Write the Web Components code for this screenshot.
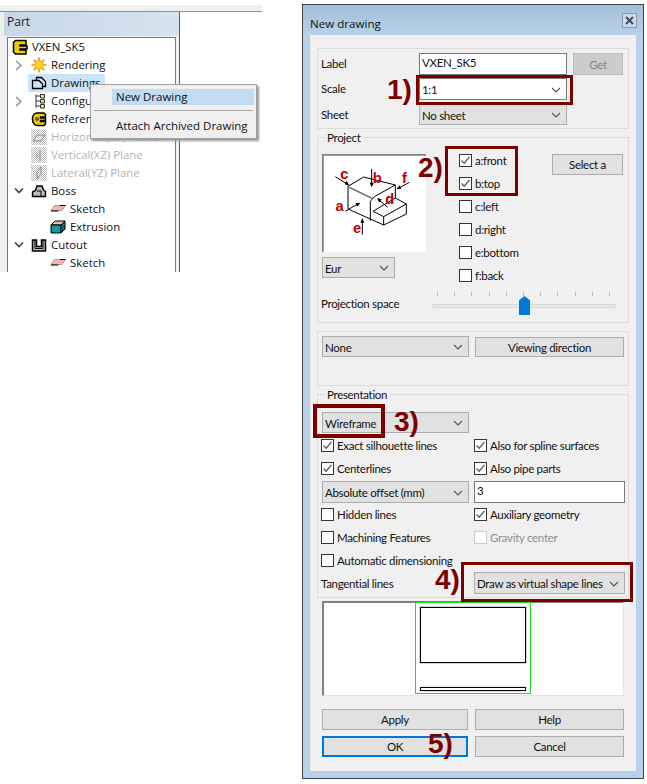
<!DOCTYPE html>
<html>
<head>
<meta charset="utf-8">
<title>New drawing</title>
<style>
html, body { margin: 0; background: #fff; }
body { font: 11.5px Lato, "Noto Sans", sans-serif; color: #111; }
.page { position: relative; width: 647px; height: 784px; display: flex; align-items: flex-start; gap: 40px; overflow: hidden; }

/* dialog content */
.g-top { height: 81px; padding: 4px 0 0 3px; display: grid; grid-template-columns: 98px 148px 6px 50px; grid-template-rows: 25px 26px 21px; }
.g-top span { line-height: 22px; }
.g-top .sheet-lab { line-height: 21px; }
.g-top .h22 { height: 22px; }
.g-project { height: 186px; padding: 11px 0 0 4px; }
.proj-grid { display: grid; grid-template-columns: 104px 33px 93px 71px; height: 142px; }
.proj-left { padding-top: 5px; display: flex; flex-direction: column; gap: 5px; }
.proj-left win-select { width: 73px; height: 21px; }
.proj-right { padding-top: 5px; }
.proj-right win-button { height: 21px; }
.slider-row { display: grid; grid-template-columns: 110px 184px; height: 26px; align-items: center; }
.slider-row span { margin-left: -1px; line-height: 24px; }
.g-view { height: 55px; padding: 4px 0 0 4px; display: grid; grid-template-columns: 147px 149px; column-gap: 6px; align-items: start; }
.g-view win-select { height: 21px; }
.g-view win-button { height: 20px; margin-top: 1px; }
.g-pres { height: 204px; padding: 17px 0 0 3px; display: grid; grid-template-columns: 153px 151px; grid-template-rows: 22px repeat(7, 23px); align-items: center; }
.g-pres .wire { width: 147px; height: 21px; margin-left: 1px; align-self: start; grid-column: 1 / 3; }
.g-pres .abs { width: 147px; height: 22px; margin: 1px 0 0 1px; align-self: start; }
.g-pres .val { height: 22px; margin-top: 1px; align-self: start; }
.g-pres .draw { height: 22px; align-self: start; }
.btn-grid { margin: 13px 0 0 5px; display: grid; grid-template-columns: 146px 149px; grid-template-rows: 21px 21px; gap: 6px 7px; }
</style>
</head>
<body>
<template id="tree-panel-t">
  <style>
    :host { display: block; width: 262px; height: 272px; padding-top: 5px; box-sizing: border-box; font: 11.4px "Open Sans", "Noto Sans", sans-serif; color: #111; }
    .band { height: 6px; background: #f0f0f0; border-bottom: 1px solid #8c8c8c; }
    .body { display: flex; height: 260px; }
    .side { width: 180px; box-sizing: border-box; background: #f0f0f0; padding-left: 4px; border-right: 1px solid #5f5f5f; display: flex; flex-direction: column; }
    .head { height: 24px; line-height: 20px; padding-left: 3px; background: linear-gradient(90deg, #c6d8e9, #d6e3ef); font-size: 12px; color: #222; }
    .tree { flex: 1; margin: 1px 3px 0 3px; background: #fff; border: 1px solid #7a7a7a; border-bottom: 0; overflow: hidden; }
  </style>
  <div class="band"></div>
  <div class="body">
    <div class="side">
      <div class="head"><slot name="title"></slot></div>
      <div class="tree"><slot></slot></div>
    </div>
  </div>
</template>

<template id="tree-item-t">
  <style>
    :host { display: flex; align-items: center; height: 18px; padding-left: 4px; white-space: nowrap; }
    :host([disabled]) { color: #b4b4b4; }
    .indent { flex: none; display: flex; align-items: center; }
    .indent svg { margin-left: 2px; }
    .sel { display: flex; align-items: center; height: 18px; gap: 4px; padding: 0 4px 0 3px; margin-left: -3px; }
    :host([selected]) .sel { background: #cce4f7; }
    .ico { width: 16px; height: 16px; flex: none; display: flex; }
    .txt { margin-top: -2px; }
  </style>
  <div class="indent"></div>
  <div class="sel"><span class="ico"><slot name="icon"></slot></span><span class="txt"><slot></slot></span></div>
</template>

<template id="menu-t">
  <style>
    :host { display: block; position: absolute; left: 90px; top: 84px; width: 167px; height: 55px; box-sizing: border-box; background: #f0f0f0; border: 1px solid #a0a0a0; box-shadow: 2px 2px 2px #9a9a9a; font: 11.5px "Open Sans", "Noto Sans", sans-serif; padding: 4px 2px 0 2px; z-index: 3; }
    .hi { height: 16px; line-height: 15px; margin-left: 19px; padding-left: 4px; background: #c3dcf3; }
    hr { height: 1px; margin: 5px 1px 5px 1px; border: 0; background: #a6a6a6; }
    .it { height: 22px; line-height: 20px; margin-left: 23px; }
  </style>
  <div class="hi">New Drawing</div>
  <hr>
  <div class="it">Attach Archived Drawing</div>
</template>

<template id="dialog-t">
  <style>
    :host { display: block; width: 342px; height: 775px; margin-top: 4px; box-sizing: border-box; border: 1px solid #38444d; background: #b9d1ea; font: 11.5px Lato, "Noto Sans", sans-serif; letter-spacing: -0.3px; color: #111; }
    .title { height: 30px; display: flex; align-items: center; justify-content: space-between; padding: 0 6px 0 7px; background: linear-gradient(#a4bed9, #b9d1ea); font: 11.6px "Open Sans", sans-serif; letter-spacing: 0; }
    .cap { margin-top: 7px; }
    .x { width: 13px; height: 13px; border: 1px solid #8a9aaa; background: #c8dbef; display: flex; align-items: center; justify-content: center; }
    .client { margin: 0 7px; height: 736px; background: #f0f0f0; padding: 13px 7px 0; box-sizing: border-box; }
    .client ::slotted(group-box) { margin-bottom: 8px; }
  </style>
  <div class="title"><span class="cap"><slot name="title"></slot></span>
    <span class="x"><svg width="9" height="9" viewBox="0 0 9 9"><path d="M1 1L8 8M8 1L1 8" stroke="#4a4a4a" stroke-width="2"/></svg></span></div>
  <div class="client"><slot></slot></div>
</template>

<template id="group-t">
  <style>
    :host { display: block; position: relative; box-sizing: border-box; border: 1px solid #dcdcdc; }
    .legend { position: absolute; left: 7px; top: -8px; padding: 0 2px; background: #f0f0f0; line-height: 15px; }
  </style>
  <div class="legend"></div>
  <slot></slot>
</template>

<template id="select-t">
  <style>
    :host { display: flex; align-items: center; box-sizing: border-box; border: 1px solid #adadad; background: #e1e1e1; padding: 1px 5px 0 2px; justify-content: space-between; height: 22px; white-space: nowrap; }
    :host([white]) { background: #fff; border-color: #7a7a7a; }
  </style>
  <span><slot></slot></span>
  <svg width="10" height="6" viewBox="0 0 10 6"><path d="M1 1L5 5L9 1" fill="none" stroke="#555" stroke-width="1.1"/></svg>
</template>

<template id="input-t">
  <style>
    :host { display: block; box-sizing: border-box; border: 1px solid #7a7a7a; background: #fff; padding-left: 2px; line-height: 18px; }
  </style>
  <slot></slot>
</template>

<template id="button-t">
  <style>
    :host { display: flex; align-items: center; justify-content: center; box-sizing: border-box; border: 1px solid #adadad; background: #e1e1e1; white-space: nowrap; }
    :host([disabled]) { background: #ccc; color: #858585; border-color: #bfbfbf; }
    :host([primary]) { border: 2px solid #0078d7; }
  </style>
  <slot></slot>
</template>

<template id="check-t">
  <style>
    :host { display: flex; align-items: center; height: 23px; gap: 3px; white-space: nowrap; }
    :host([disabled]) { color: #8f8f8f; }
    .box { width: 13px; height: 13px; box-sizing: border-box; border: 1px solid #333; background: #fff; display: flex; flex: none; }
    :host([disabled]) .box { border-color: #ccc; }
    svg { display: none; }
    :host([checked]) svg { display: block; }
  </style>
  <span class="box"><svg width="11" height="11" viewBox="0 0 11 11"><path d="M1.5 5.5L4.2 8.2L9.5 1.8" fill="none" stroke="#555" stroke-width="1.3"/></svg></span>
  <span><slot></slot></span>
</template>

<template id="slider-t">
  <style>
    :host { display: block; position: relative; height: 26px; }
    .ticks { display: flex; justify-content: space-between; margin: 0 6px 0 5px; padding-top: 1px; height: 4px; }
    .ticks i { width: 1px; height: 4px; background: #bdbdbd; }
    .track { margin-top: 8px; height: 4px; box-sizing: border-box; background: #e7eaea; border: 1px solid #d6d6d6; }
    .thumb { position: absolute; left: 87px; top: 5px; width: 11px; height: 19px; background: #0078d7; clip-path: polygon(50% 0, 100% 22%, 100% 100%, 0 100%, 0 22%); }
  </style>
  <div class="ticks"><i></i><i></i><i></i><i></i><i></i><i></i><i></i><i></i><i></i><i></i><i></i></div>
  <div class="track"></div>
  <div class="thumb"></div>
</template>

<template id="figure-t">
  <style>
    :host { display: block; width: 104px; height: 98px; box-sizing: border-box; background: #fff; border-left: 1px solid #808080; border-top: 1px solid #808080; box-shadow: inset 1px 1px 0 #a0a0a0; }
    svg { display: block; margin: -1px 0 0 -1px; }
    path { fill: none; stroke: #000; stroke-width: 3; }
    .thick { stroke: #777; stroke-width: 5; }
    .head { fill: #000; stroke: none; }
    text { font: bold 44px "Liberation Sans", sans-serif; letter-spacing: 0; fill: #c00000; text-anchor: middle; }
  </style>
  <svg width="104" height="98" viewBox="65 90 312 294">
    <path d="M143 187L190 159M190 159L285 183M143 187V255L250 303L318 270V240L285 222V183L222 218L210 232V290"/>
    <path class="thick" d="M146 190L218 224"/>
    <path d="M218 262L250 278L318 240M218 262L285 222M250 278V303"/>
    <path d="M105 158L140 180M214 135V182M327 175L296 192M135 262L172 240M262 250L236 228M186 332V290"/>
    <path class="head" d="M148 185L133 181L139 171ZM214 190L208 176H220ZM288 196L298 184L303 194ZM180 236L171 248L165 238ZM230 222L244 226L237 236ZM186 282L192 296H180Z"/>
    <text x="132" y="166">c</text>
    <text x="231" y="178">b</text>
    <text x="312" y="176">f</text>
    <text x="118" y="260">a</text>
    <text x="268" y="241">d</text>
    <text x="170" y="328">e</text>
  </svg>
</template>

<template id="preview-t">
  <style>
    :host { display: block; width: 302px; height: 95px; margin-left: 5px; box-sizing: border-box; background: #fff; border: 1px solid #e4e4e4; border-left: 2px solid #808080; border-top: 2px solid #808080; }
    .sheet { width: 116px; height: 92px; box-sizing: border-box; margin: -1px 0 0 91px; border: 1px solid #1ee01e; padding: 4px 4px 0; }
    .a { height: 56px; box-sizing: border-box; border: 1px solid #000; box-shadow: 0 0 1px #000; }
    .b { height: 4px; box-sizing: border-box; border: 1px solid #000; margin-top: 24px; box-shadow: 0 0 1px #000; }
  </style>
  <div class="sheet"><div class="a"></div><div class="b"></div></div>
</template>

<template id="callout-t">
  <style>
    :host { display: block; position: absolute; box-sizing: border-box; border: 3px solid #7b0000; z-index: 2; }
  </style>
</template>

<template id="step-t">
  <style>
    :host { display: block; position: absolute; font: bold 28px/30px "Liberation Sans", sans-serif; color: #7b0000; z-index: 2; white-space: nowrap; }
  </style>
  <slot></slot>
</template>

<div class="page">
  <tree-panel>
    <span slot="title">Part</span>
    <tree-item level="0"><svg slot="icon" width="16" height="16" viewBox="0 0 16 16"><path d="M3.5 1.5H14V6H8V7H15V10H8V11H14V15H3.5L1.5 13V3.5Z" fill="#f3cb00" stroke="#000" stroke-width="1.5"/></svg>VXEN_SK5</tree-item>
    <tree-item level="1" exp="right"><svg slot="icon" width="16" height="16" viewBox="0 0 16 16"><path d="M8 0.5V15.5M0.5 8H15.5M2.7 2.7L13.3 13.3M13.3 2.7L2.7 13.3" stroke="#f28c1a" stroke-width="1.6"/><circle cx="8" cy="8" r="4.4" fill="#ffd91a" stroke="#f6a11a"/></svg>Rendering</tree-item>
    <tree-item level="1" selected><svg slot="icon" width="16" height="16" viewBox="0 0 16 16"><path d="M5.5 5V2.5H10.5L14.5 6.5V11.5H11.5" fill="none" stroke="#000" stroke-width="1.3"/><path d="M1.5 5.5H8L11.5 9V13.5H1.5Z" fill="none" stroke="#000" stroke-width="1.3"/></svg>Drawings</tree-item>
    <tree-item level="1" exp="right"><svg slot="icon" width="16" height="16" viewBox="0 0 16 16"><path d="M5 1.5V14.5M5 3H9M5 8H9M5 13H9" stroke="#333" fill="none"/><path d="M9.5 1.5H13.5V5H9.5ZM9.5 6.5H13.5V10H9.5ZM9.5 11.5H13.5V15H9.5Z" fill="#f7e27a" stroke="#333"/></svg>Configurations</tree-item>
    <tree-item level="1"><svg slot="icon" width="16" height="16" viewBox="0 0 16 16"><path d="M6 2H13L14.5 3.5V6H9.5V7H14.5V9.5H9.5V10.5H14.5V13L13 14.5H6C3 14.5 1.5 11 1.5 8C1.5 5 3 2 6 2Z" fill="#f3cb00" stroke="#000" stroke-width="1.5"/><circle cx="6" cy="8" r="2" fill="#555"/></svg>Reference</tree-item>
    <tree-item level="1" disabled><svg slot="icon" width="16" height="16" viewBox="0 0 16 16"><defs><pattern id="d1" width="2" height="2" patternUnits="userSpaceOnUse"><rect width="1" height="1" fill="#bbb"/><rect x="1" y="1" width="1" height="1" fill="#bbb"/></pattern></defs><rect width="16" height="16" fill="url(#d1)"/><path d="M2 12L6 6H14L10 12Z" fill="none" stroke="#888"/></svg>Horizontal(XY) Plane</tree-item>
    <tree-item level="1" disabled><svg slot="icon" width="16" height="16" viewBox="0 0 16 16"><defs><pattern id="d2" width="2" height="2" patternUnits="userSpaceOnUse"><rect width="1" height="1" fill="#bbb"/><rect x="1" y="1" width="1" height="1" fill="#bbb"/></pattern></defs><rect width="16" height="16" fill="url(#d2)"/><path d="M9 3V14M6 6V11" fill="none" stroke="#888"/></svg>Vertical(XZ) Plane</tree-item>
    <tree-item level="1" disabled><svg slot="icon" width="16" height="16" viewBox="0 0 16 16"><defs><pattern id="d3" width="2" height="2" patternUnits="userSpaceOnUse"><rect width="1" height="1" fill="#bbb"/><rect x="1" y="1" width="1" height="1" fill="#bbb"/></pattern></defs><rect width="16" height="16" fill="url(#d3)"/><path d="M6 14L10 9V2L6 7Z" fill="none" stroke="#888"/></svg>Lateral(YZ) Plane</tree-item>
    <tree-item level="1" exp="down"><svg slot="icon" width="16" height="16" viewBox="0 0 16 16"><path d="M1.5 13.5V9L4.5 7.5L6 3H11L12.5 7L14.5 8.5V13.5Z" fill="#bbb" stroke="#000" stroke-width="1.4"/><path d="M6 8H10V13" fill="none" stroke="#000"/></svg>Boss</tree-item>
    <tree-item level="2"><svg slot="icon" width="16" height="16" viewBox="0 0 16 16"><path d="M4.5 4.5H15.5L12 9.5H1Z" fill="#f6b4b4" stroke="#8a6a6a" stroke-width="0.6"/><path d="M1 10H8.5M10 4.5H15.5" stroke="#000" fill="none"/></svg>Sketch</tree-item>
    <tree-item level="2"><svg slot="icon" width="16" height="16" viewBox="0 0 16 16"><path d="M1 6L5 2H15L11 6Z" fill="#f6b4b4" stroke="#000"/><path d="M1 6H11V14H1Z" fill="#109a9a" stroke="#000"/><path d="M11 6L15 2V10L11 14Z" fill="#0c6a78" stroke="#000"/></svg>Extrusion</tree-item>
    <tree-item level="1" exp="down"><svg slot="icon" width="16" height="16" viewBox="0 0 16 16"><path d="M1.5 3H5.5V9.5H10.5V3H14.5V14H1.5Z" fill="#bbb" stroke="#000" stroke-width="1.5"/><path d="M4 3V11.5H12V3" fill="none" stroke="#000"/></svg>Cutout</tree-item>
    <tree-item level="2"><svg slot="icon" width="16" height="16" viewBox="0 0 16 16"><path d="M4.5 4.5H15.5L12 9.5H1Z" fill="#f6b4b4" stroke="#8a6a6a" stroke-width="0.6"/><path d="M1 10H8.5M10 4.5H15.5" stroke="#000" fill="none"/></svg>Sketch</tree-item>
  </tree-panel>

  <context-menu></context-menu>

  <new-dialog>
    <span slot="title">New drawing</span>

    <group-box class="g-top">
      <span>Label</span><win-input class="h22">VXEN_SK5</win-input><i></i><win-button class="h22" disabled>Get</win-button>
      <span>Scale</span><win-select white>1:1</win-select><i></i><i></i>
      <span class="sheet-lab">Sheet</span><win-select style="height:21px">No sheet</win-select><i></i><i></i>
    </group-box>

    <group-box class="g-project" legend="Project">
      <div class="proj-grid">
        <div class="proj-left"><part-figure></part-figure><win-select>Eur</win-select></div>
        <i></i>
        <div>
          <win-check checked>a:front</win-check>
          <win-check checked>b:top</win-check>
          <win-check>c:left</win-check>
          <win-check>d:right</win-check>
          <win-check>e:bottom</win-check>
          <win-check>f:back</win-check>
        </div>
        <div class="proj-right"><win-button>Select a</win-button></div>
      </div>
      <div class="slider-row"><span>Projection space</span><win-slider></win-slider></div>
    </group-box>

    <group-box class="g-view">
      <win-select>None</win-select><win-button>Viewing direction</win-button>
    </group-box>

    <group-box class="g-pres" legend="Presentation" style="margin-bottom:3px">
      <win-select class="wire">Wireframe</win-select>
      <win-check checked>Exact silhouette lines</win-check><win-check checked>Also for spline surfaces</win-check>
      <win-check checked>Centerlines</win-check><win-check checked>Also pipe parts</win-check>
      <win-select class="abs">Absolute offset (mm)</win-select><win-input class="val">3</win-input>
      <win-check>Hidden lines</win-check><win-check checked>Auxiliary geometry</win-check>
      <win-check>Machining Features</win-check><win-check disabled>Gravity center</win-check>
      <win-check>Automatic dimensioning</win-check><i></i>
      <span>Tangential lines</span><win-select class="draw">Draw as virtual shape lines</win-select>
    </group-box>

    <drawing-preview></drawing-preview>

    <div class="btn-grid">
      <win-button>Apply</win-button><win-button>Help</win-button>
      <win-button primary>OK</win-button><win-button>Cancel</win-button>
    </div>
  </new-dialog>

  <call-out style="left:416px;top:75px;width:157px;height:30px"></call-out>
  <step-mark style="left:387px;top:75px">1)</step-mark>
  <call-out style="left:445px;top:146px;width:73px;height:50px"></call-out>
  <step-mark style="left:418px;top:153px">2)</step-mark>
  <call-out style="left:313px;top:404px;width:72px;height:34px;border-width:4px"></call-out>
  <step-mark style="left:394px;top:407px">3)</step-mark>
  <call-out style="left:461px;top:562px;width:172px;height:40px"></call-out>
  <step-mark style="left:435px;top:565px">4)</step-mark>
  <step-mark style="left:428px;top:729px">5)</step-mark>
</div>

<script>
function fromTemplate(id) {
  return class extends HTMLElement {
    constructor() {
      super();
      this.attachShadow({ mode: "open" });
      this.shadowRoot.appendChild(document.getElementById(id).content.cloneNode(true));
    }
  };
}

class TreeItem extends fromTemplate("tree-item-t") {
  connectedCallback() {
    const level = Number(this.getAttribute("level") || 0);
    const indent = this.shadowRoot.querySelector(".indent");
    indent.style.width = (level * 19) + "px";
    const exp = this.getAttribute("exp");
    if (exp === "right") {
      indent.innerHTML = '<svg width="9" height="11" viewBox="0 0 9 11"><path d="M2 1L7 5.5L2 10" fill="none" stroke="#a6a6a6" stroke-width="1.7"/></svg>';
    } else if (exp === "down") {
      indent.innerHTML = '<svg width="10" height="8" viewBox="0 0 10 8"><path d="M1 1.5L5 5.5L9 1.5" fill="none" stroke="#444" stroke-width="1.7"/></svg>';
    }
  }
}

class GroupBox extends fromTemplate("group-t") {
  connectedCallback() {
    const legend = this.shadowRoot.querySelector(".legend");
    const text = this.getAttribute("legend");
    if (text) legend.textContent = text;
    else legend.remove();
  }
}

customElements.define("tree-panel", fromTemplate("tree-panel-t"));
customElements.define("tree-item", TreeItem);
customElements.define("context-menu", fromTemplate("menu-t"));
customElements.define("new-dialog", fromTemplate("dialog-t"));
customElements.define("group-box", GroupBox);
customElements.define("win-select", fromTemplate("select-t"));
customElements.define("win-input", fromTemplate("input-t"));
customElements.define("win-button", fromTemplate("button-t"));
customElements.define("win-check", fromTemplate("check-t"));
customElements.define("win-slider", fromTemplate("slider-t"));
customElements.define("part-figure", fromTemplate("figure-t"));
customElements.define("drawing-preview", fromTemplate("preview-t"));
customElements.define("call-out", fromTemplate("callout-t"));
customElements.define("step-mark", fromTemplate("step-t"));
</script>
</body>
</html>
